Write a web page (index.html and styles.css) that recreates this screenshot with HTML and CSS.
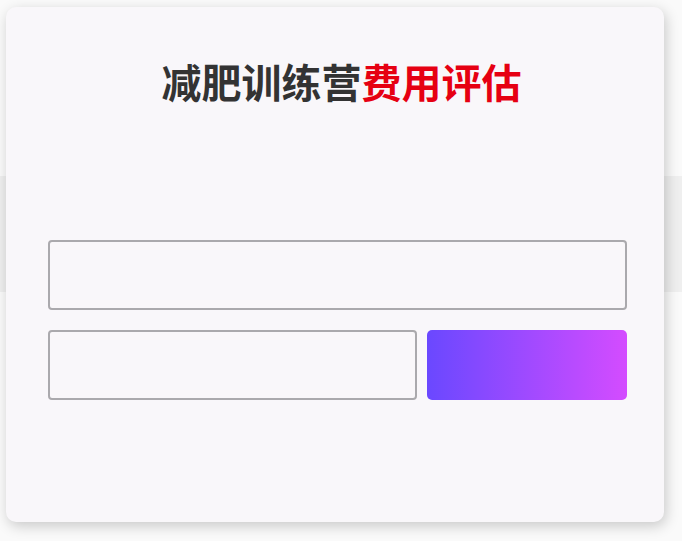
FILE: index.html
```html
<!DOCTYPE html>
<html lang="zh-CN">
<head>
    <meta charset="UTF-8">
    <meta name="viewport" content="width=device-width, initial-scale=1.0">
    <title>减肥训练营费用评估</title>
    <link rel="stylesheet" href="styles.css">
</head>
<body>

    <div class="page-band"></div>

    <div class="modal">
        <h2 class="modal-title">减肥训练营<span class="hl">费用评估</span></h2>
        <form class="estimate-form" id="estimateForm">
            <input type="text" class="field" id="userName">
            <div class="form-row">
                <input type="tel" class="field" id="userPhone">
                <button type="submit" class="submit-btn"></button>
            </div>
        </form>
    </div>

</body>
</html>
```

FILE: styles.css
```css
body {
    margin: 0;
    background: #fafafa;
    font-family: "Noto Sans CJK SC", "Noto Sans", sans-serif;
}
.page-band {
    margin-top: 176px;
    height: 116px;
    background: #efefef;
}
.modal {
    position: absolute;
    top: 7px;
    left: 6px;
    width: 658px;
    height: 515px;
    box-sizing: border-box;
    padding: 50px 37px 0 42px;
    background: #f9f7fa;
    border-radius: 10px;
    box-shadow: 2px 4px 14px rgba(0, 0, 0, 0.2);
}
.modal-title {
    margin: 0;
    text-align: center;
    font-size: 40px;
    line-height: 48px;
    font-weight: bold;
    color: #333;
    padding-left: 8px;
}
.modal-title .hl {
    color: #e60012;
}
.estimate-form {
    margin-top: 135px;
    display: flex;
    flex-direction: column;
    gap: 20px;
}
.form-row {
    display: flex;
    gap: 10px;
}
.field {
    box-sizing: border-box;
    height: 70px;
    width: 100%;
    border: 2px solid #aaa9ad;
    border-radius: 4px;
    background: #f9f7fa;
    padding: 0 12px;
    font-size: 16px;
    outline: none;
}
.form-row .field {
    flex: 1;
}
.submit-btn {
    width: 200px;
    height: 70px;
    flex: none;
    border: none;
    border-radius: 5px;
    background: linear-gradient(to right, #6a48ff, #d44cff);
    cursor: pointer;
}
```
